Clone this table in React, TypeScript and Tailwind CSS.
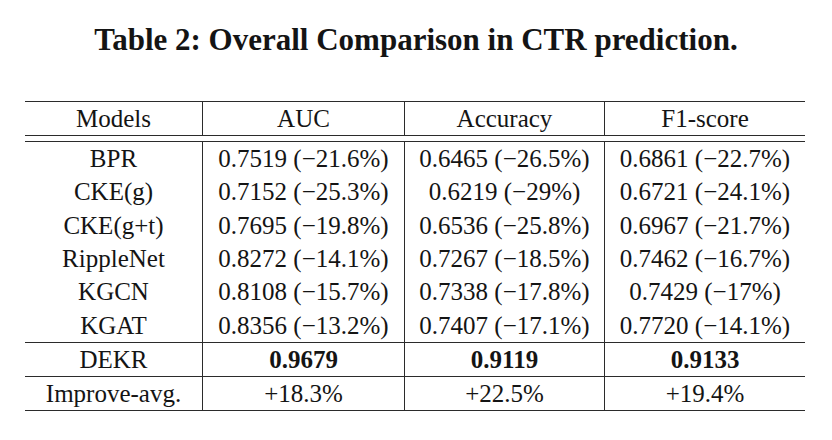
const cols = "grid grid-cols-[177px_202px_200px_201px]"

const rows: [string, string, string, string][] = [
  ["BPR", "0.7519 (−21.6%)", "0.6465 (−26.5%)", "0.6861 (−22.7%)"],
  ["CKE(g)", "0.7152 (−25.3%)", "0.6219 (−29%)", "0.6721 (−24.1%)"],
  ["CKE(g+t)", "0.7695 (−19.8%)", "0.6536 (−25.8%)", "0.6967 (−21.7%)"],
  ["RippleNet", "0.8272 (−14.1%)", "0.7267 (−18.5%)", "0.7462 (−16.7%)"],
  ["KGCN", "0.8108 (−15.7%)", "0.7338 (−17.8%)", "0.7429 (−17%)"],
  ["KGAT", "0.8356 (−13.2%)", "0.7407 (−17.1%)", "0.7720 (−14.1%)"],
]

function Row({ cells, className, bold }: { cells: string[]; className: string; bold?: boolean }) {
  return (
    <div className={`${cols} ${className}`}>
      {cells.map((c, i) => (
        <div
          key={i}
          className={`flex items-center justify-center ${i > 0 ? "border-l border-[#2b2b2b]" : ""} ${bold && i > 0 ? "font-bold" : ""}`}
        >
          {c}
        </div>
      ))}
    </div>
  )
}

export default function App() {
  return (
    <main
      className="w-[832px] h-[440px] bg-white text-[#141414] overflow-hidden"
      style={{ fontFamily: '"Liberation Serif", "DejaVu Serif", serif' }}
    >
      <h1 className="mt-[22px] text-center text-[31px] leading-[36px] font-bold">
        Table 2: Overall Comparison in CTR prediction.
      </h1>
      <div className="mt-[43px] ml-[25px] w-[780px] border-t border-[#2b2b2b] text-[25px] leading-none">
        <Row cells={["Models", "AUC", "Accuracy", "F1-score"]} className="h-[34px] border-b border-[#2b2b2b]" />
        <div className="h-[6px] border-b border-[#2b2b2b]" />
        {rows.map((r) => (
          <Row key={r[0]} cells={r} className="h-[33.33px]" />
        ))}
        <Row
          cells={["DEKR", "0.9679", "0.9119", "0.9133"]}
          bold
          className="h-[35px] border-y border-[#2b2b2b]"
        />
        <Row cells={["Improve-avg.", "+18.3%", "+22.5%", "+19.4%"]} className="h-[34px] border-b border-[#2b2b2b]" />
      </div>
    </main>
  )
}
